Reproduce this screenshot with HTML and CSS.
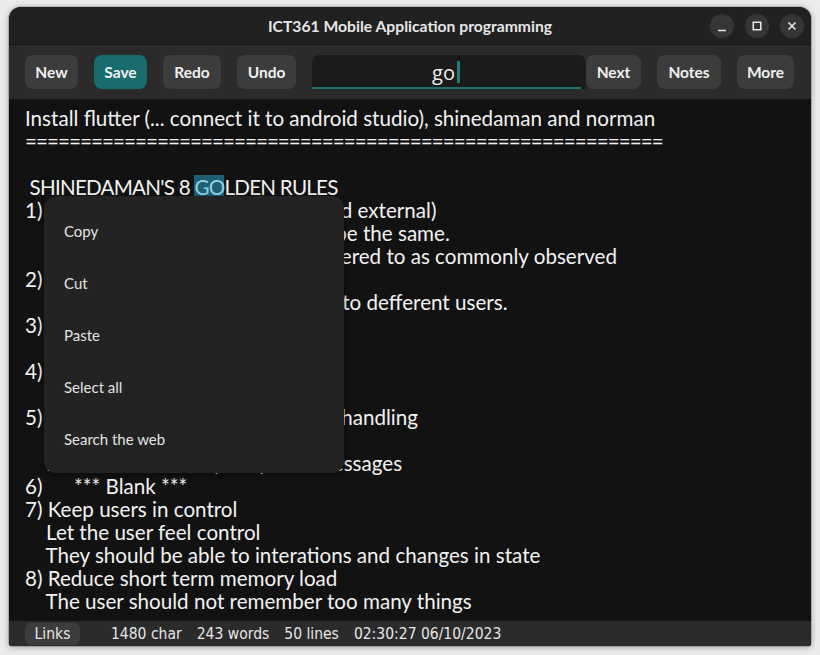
FILE: index.html
```html
<!DOCTYPE html>
<html lang="en">
<head>
<meta charset="utf-8">
<title>ICT361 Mobile Application programming</title>
<link rel="stylesheet" href="styles.css">
</head>
<body>
<div class="window">
  <header class="titlebar">
    <div class="title">ICT361 Mobile Application programming</div>
    <div class="controls">
      <span class="ctl"><svg width="24" height="24" viewBox="0 0 24 24"><path d="M8 16.5h8" stroke="#e8e8e8" stroke-width="1.5" fill="none"/></svg></span>
      <span class="ctl"><svg width="24" height="24" viewBox="0 0 24 24"><rect x="8.25" y="8.25" width="7.5" height="7.5" stroke="#e8e8e8" stroke-width="1.5" fill="none"/></svg></span>
      <span class="ctl"><svg width="24" height="24" viewBox="0 0 24 24"><path d="M8.5 8.5l7 7M15.5 8.5l-7 7" stroke="#e8e8e8" stroke-width="1.5" fill="none"/></svg></span>
    </div>
  </header>
  <nav class="toolbar">
    <button class="btn w-new">New</button>
    <button class="btn btn-accent w-save">Save</button>
    <button class="btn w-redo">Redo</button>
    <button class="btn w-undo">Undo</button>
    <div class="search"><span class="search-text">go</span><span class="caret"></span></div>
    <button class="btn btn-next w-next">Next</button>
    <button class="btn w-notes">Notes</button>
    <button class="btn w-more">More</button>
  </nav>
  <main class="editor">
    <div class="line">Install flutter (... connect it to android studio), shinedaman and norman</div>
    <div class="line eq">==========================================================</div>
    <div class="line"> </div>
    <div class="line caps"> SHINEDAMAN'S 8 <span class="sel">GO</span>LDEN RULES</div>
    <div class="line">1) Strive for consistency  (interal and external)</div>
    <div class="line">    Similar situations should always be the same.</div>
    <div class="line">    Standards must therefore be adhered to as commonly observed</div>
    <div class="line">2) Cater to universal usability</div>
    <div class="line">    Interface should adapt and cater to defferent users.</div>
    <div class="line">3) Offer informative feedback</div>
    <div class="line"> </div>
    <div class="line">4) Design dialogs to yield closure</div>
    <div class="line"> </div>
    <div class="line">5) Prevent errors, give simple error handling</div>
    <div class="line"> </div>
    <div class="line">    Let the user know (clear) with messages</div>
    <div class="line">6)      *** Blank ***</div>
    <div class="line">7) Keep users in control</div>
    <div class="line">    Let the user feel control</div>
    <div class="line">    They should be able to interations and changes in state</div>
    <div class="line">8) Reduce short term memory load</div>
    <div class="line">    The user should not remember too many things</div>
  </main>
  <footer class="statusbar">
    <button class="links">Links</button>
    <span class="stat">1480 char</span>
    <span class="stat">243 words</span>
    <span class="stat">50 lines</span>
    <span class="stat">02:30:27 06/10/2023</span>
  </footer>
  <ul class="menu">
    <li class="menu-item">Copy</li>
    <li class="menu-item">Cut</li>
    <li class="menu-item">Paste</li>
    <li class="menu-item">Select all</li>
    <li class="menu-item">Search the web</li>
  </ul>
</div>
</body>
</html>
```
FILE: styles.css
```css
* { box-sizing: border-box; }
html, body { margin: 0; padding: 0; }
body {
  background: #ebebeb;
  width: 820px;
  height: 655px;
  overflow: hidden;
  font-family: Lato, "Open Sans", sans-serif;
}
.window {
  position: relative;
  margin: 7px 9px 0;
  width: 802px;
  height: 639px;
  border-radius: 12px 12px 3px 3px;
  overflow: hidden;
  background: #121212;
  box-shadow: 0 1px 6px rgba(0,0,0,0.35), 0 0 0 1px rgba(0,0,0,0.15);
  display: flex;
  flex-direction: column;
}
.titlebar {
  height: 38px;
  flex: none;
  background: #212121;
  border-bottom: 1px solid #151515;
  display: flex;
  align-items: center;
  justify-content: center;
  position: relative;
}
.title {
  color: #e6e6e6;
  font-weight: 700;
  font-size: 15.7px;
}
.controls {
  position: absolute;
  right: 7px;
  top: 7px;
  display: flex;
  gap: 11px;
}
.ctl {
  width: 24px;
  height: 24px;
  border-radius: 50%;
  background: #363636;
  display: block;
}
.ctl svg { display: block; }
.toolbar {
  height: 54px;
  flex: none;
  background: #2b2b2b;
  display: flex;
  align-items: center;
  padding: 0 17px 0 16px;
  gap: 16px;
}
.btn {
  height: 34px;
  border: 0;
  border-radius: 8px;
  background: #3c3c3c;
  color: #f0f0f0;
  font-family: inherit;
  font-weight: 700;
  font-size: 15.5px;
  padding: 0;
  flex: none;
  text-align: center;
}
.w-new { width: 53px; }
.w-save { width: 53px; }
.w-redo { width: 58px; }
.w-undo { width: 59px; }
.w-next { width: 55px; }
.w-notes { width: 64px; }
.w-more { width: 57px; }
.btn-accent { background: #176d6d; }
.btn-next { margin-left: -16px; }
.search {
  width: 274px;
  height: 34px;
  flex: none;
  background: #1b1b1b;
  border-radius: 8px 8px 0 0;
  position: relative;
  display: flex;
  align-items: center;
  justify-content: center;
  padding-right: 6px;
}
.search::after {
  content: "";
  position: absolute;
  left: 0;
  right: 5px;
  bottom: 0;
  height: 2px;
  background: #1a7272;
}
.search-text {
  color: #f0f0f0;
  font-size: 20px;
  font-family: "Open Sans", sans-serif;
}
.caret {
  width: 3px;
  height: 22px;
  background: #1a8080;
  margin-left: 2px;
}
.editor {
  flex: 1;
  background: #121212;
  color: #f2f2f2;
  font-size: 20.6px;
  line-height: 23px;
  padding: 8px 16px 0;
  overflow: hidden;
}
.line {
  height: 23px;
  white-space: pre;
}
.eq { letter-spacing: -0.95px; }
.caps { letter-spacing: -0.75px; }
.sel {
  background: #1d5f74;
  color: #93d2e6;
}
.statusbar {
  height: 25px;
  flex: none;
  background: #2b2b2b;
  display: flex;
  align-items: center;
  padding: 0 16px;
  gap: 15px;
  font-family: "DejaVu Sans Condensed", "DejaVu Sans", sans-serif;
  font-stretch: condensed;
  color: #e6e6e6;
  font-size: 15.5px;
}
.links {
  height: 22px;
  width: 55px;
  border: 0;
  border-radius: 6px;
  background: #3c3c3c;
  color: #e6e6e6;
  font: inherit;
  padding: 0;
  margin-right: 16px;
}
.menu {
  position: absolute;
  left: 35px;
  top: 189px;
  width: 300px;
  margin: 0;
  padding: 9px 0 8px;
  list-style: none;
  background: #232323;
  border-radius: 12px;
  box-shadow: 0 2px 6px rgba(0,0,0,0.4);
}
.menu-item {
  height: 52px;
  display: flex;
  align-items: center;
  padding-left: 20px;
  color: #e2e2e2;
  font-size: 15px;
}
```
